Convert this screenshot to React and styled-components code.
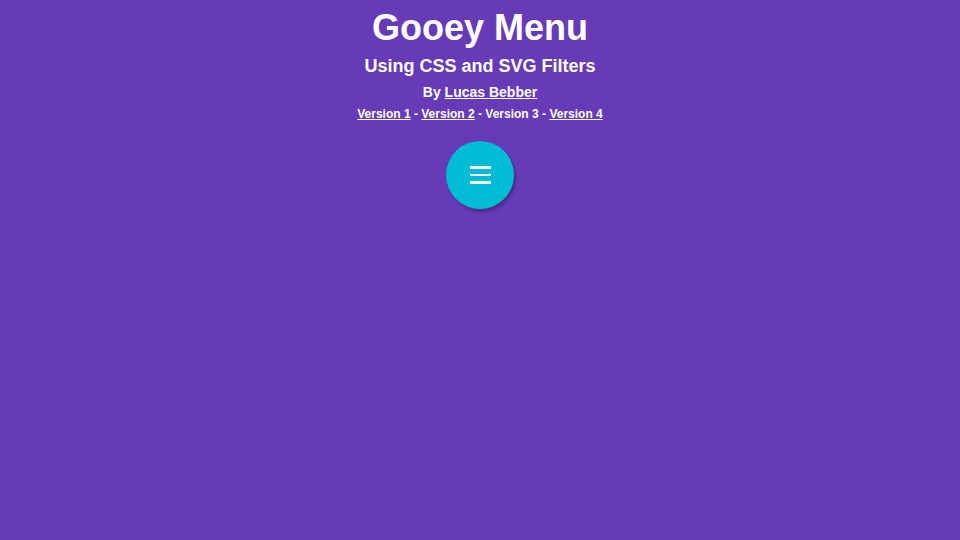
import React from 'react';
import styled, { createGlobalStyle } from 'styled-components';

const GlobalStyle = createGlobalStyle`
    html, body {
        margin: 0;
        padding: 0;
        height: 100%;
        background: #673ab7;
    }
    body {
        font-family: "Liberation Sans", Arial, sans-serif;
        color: #fff;
    }
`;

const Page = styled.div`
    display: flex;
    flex-direction: column;
    align-items: center;
    text-align: center;
    min-height: 540px;
    font-weight: bold;
`;

const Title = styled.h1`
    margin: 6px 0 0;
    font-size: 36px;
    line-height: 44px;
`;

const Subtitle = styled.h2`
    margin: 0;
    font-size: 18px;
    line-height: 32px;
`;

const Byline = styled.div`
    font-size: 14px;
    line-height: 20px;
`;

const Versions = styled.div`
    font-size: 12px;
    line-height: 16px;
    margin-top: 4px;
`;

const Link = styled.a`
    color: #fff;
    text-decoration: underline;
`;

const MenuButton = styled.button`
    margin-top: 19px;
    width: 68px;
    height: 68px;
    border-radius: 50%;
    border: none;
    padding: 0;
    background: #00bcd4;
    box-shadow: 2px 3px 3px rgba(0, 0, 0, 0.25);
    display: flex;
    flex-direction: column;
    align-items: center;
    justify-content: center;
    gap: 5px;
    cursor: pointer;
`;

const Line = styled.span`
    display: block;
    width: 21px;
    height: 2.5px;
    background: #fff;
`;

const versions = [ 1, 2, 3, 4 ];

const App = () => (
    <>
        <GlobalStyle/>
        <Page>
            <Title>Gooey Menu</Title>
            <Subtitle>Using CSS and SVG Filters</Subtitle>
            <Byline>By <Link href="#">Lucas Bebber</Link></Byline>
            <Versions>
                { versions.map((v, i) => (
                    <React.Fragment key={ v }>
                        { i > 0 && ' - ' }
                        { v === 3 ? `Version ${ v }` : <Link href="#">Version { v }</Link> }
                    </React.Fragment>
                )) }
            </Versions>
            <MenuButton aria-label="menu">
                <Line/>
                <Line/>
                <Line/>
            </MenuButton>
        </Page>
    </>
);

export default App;
